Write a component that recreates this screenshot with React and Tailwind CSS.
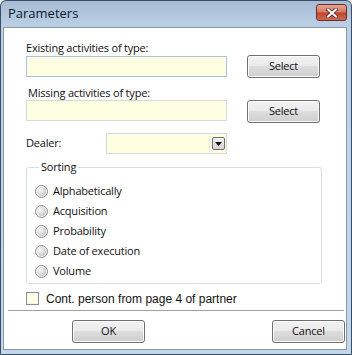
import React from "react";

const ui = { fontFamily: '"Open Sans", "Noto Sans", sans-serif' };

function WinButton({ label, className = "" }) {
  return (
    <button
      type="button"
      className={
        "h-[23px] w-[73px] shrink-0 rounded-[3px] border border-[#707070] bg-[linear-gradient(to_bottom,#f2f2f2_0%,#ebebeb_45%,#dddddd_50%,#cfcfcf_100%)] text-[11px] tracking-[-0.2px] text-[#111] shadow-[inset_0_0_0_1px_#fcfcfc] " +
        className
      }
      style={ui}
    >
      {label}
    </button>
  );
}

function Radio({ label }) {
  return (
    <label className="flex h-[20px] items-center gap-[5px]">
      <span className="flex h-[13px] w-[13px] items-center justify-center rounded-full border border-[#8e8f8f] bg-[#f4f4f4]">
        <span className="h-[9px] w-[9px] rounded-full bg-[radial-gradient(circle_at_35%_35%,#fbfbfb_0%,#d6d6d6_55%,#aeb0b1_100%)]" />
      </span>
      <span className="text-[11px] tracking-[-0.2px] text-[#111]">{label}</span>
    </label>
  );
}

export default function App() {
  return (
    <div
      className="flex h-[355px] w-[352px] flex-col rounded-t-[6px] border border-[#3b4d61] bg-[linear-gradient(to_bottom,#a6bcd4_0px,#bcd0e6_26px,#c3d7ec_100%)]"
      style={ui}
    >
      {/* title bar */}
      <div className="flex h-[26px] shrink-0 items-center justify-between pl-[7px] pr-[4px]">
        <span className="text-[13px] text-[#0b1a2c]">Parameters</span>
        <div className="mt-[-3px] flex h-[17px] w-[31px] items-center justify-center rounded-[3px] border border-[#6e2b2b] bg-[linear-gradient(to_bottom,#e8a493_0%,#d47a63_45%,#c0452d_55%,#cf6a52_100%)]">
          <svg width="12" height="10" viewBox="0 0 12 10">
            <path
              d="M2 1.5 L10 8.5 M10 1.5 L2 8.5"
              stroke="#4a1a14"
              strokeWidth="3.6"
              strokeLinecap="square"
            />
            <path
              d="M2 1.5 L10 8.5 M10 1.5 L2 8.5"
              stroke="#ffffff"
              strokeWidth="2.2"
              strokeLinecap="square"
            />
          </svg>
        </div>
      </div>

      {/* client area */}
      <div className="mb-[4px] ml-[2px] mr-[4px] flex flex-1 flex-col border border-[#8a97a6] bg-white text-[11px] tracking-[-0.2px] text-[#111]">
        <div className="flex flex-col pl-[22px] pt-[13px]">
          <span className="h-[14px] leading-[14px]">Existing activities of type:</span>
          <div className="flex h-[23px] items-center">
            <div className="h-[21px] w-[201px] border border-[#a7c3de] bg-[#ffffe1]" />
            <WinButton label="Select" className="ml-[20px]" />
          </div>

          <span className="ml-[2px] mt-[8px] h-[14px] leading-[14px]">Missing activities of type:</span>
          <div className="flex h-[23px] items-start">
            <div className="h-[21px] w-[201px] border border-[#d4d9de] bg-[#ffffe1]" />
            <WinButton label="Select" className="ml-[20px]" />
          </div>

          <div className="mt-[10px] flex h-[21px] items-center">
            <span className="w-[80px]">Dealer:</span>
            <div className="flex h-[21px] w-[121px] items-center justify-end border border-[#d4d9de] bg-[#ffffe1] pr-[1px]">
              <div className="h-[17px] w-[1px] bg-[#e6e6e6]" />
              <div className="ml-[2px] flex h-[13px] w-[13px] items-center justify-center rounded-[2px] border border-[#707070] bg-[linear-gradient(to_bottom,#f4f4f4,#d4d4d4)]">
                <svg width="7" height="4" viewBox="0 0 7 4">
                  <path d="M0 0 H7 L3.5 4 Z" fill="#111" />
                </svg>
              </div>
            </div>
          </div>

          <fieldset className="mt-[7px] h-[123px] w-[296px] rounded-[3px] border border-[#d5dfe5] pl-[8px] pt-[8px]">
            <legend className="ml-[4px] h-[12px] px-[2px] leading-[12px]">Sorting</legend>
            <div className="flex flex-col">
              <Radio label="Alphabetically" />
              <Radio label="Acquisition" />
              <Radio label="Probability" />
              <Radio label="Date of execution" />
              <Radio label="Volume" />
            </div>
          </fieldset>

          <label className="mt-[8px] flex h-[13px] items-center gap-[7px]">
            <span className="h-[13px] w-[13px] border border-[#8f8f8f] bg-[#ffffe6] shadow-[inset_0_0_0_1px_#f4f4f4]" />
            <span
              className="text-[12px] tracking-normal text-[#111]"
              style={{ fontFamily: '"Liberation Sans", Arial, sans-serif' }}
            >
              Cont. person from page 4 of partner
            </span>
          </label>
        </div>

        <div className="ml-[4px] mr-[2px] mt-[5px] h-[1px] bg-[#a0a0a0]" />

        <div className="flex pl-[68px] pr-[1px] pt-[9px]">
          <WinButton label="OK" />
          <WinButton label="Cancel" className="ml-auto" />
        </div>
      </div>
    </div>
  );
}
